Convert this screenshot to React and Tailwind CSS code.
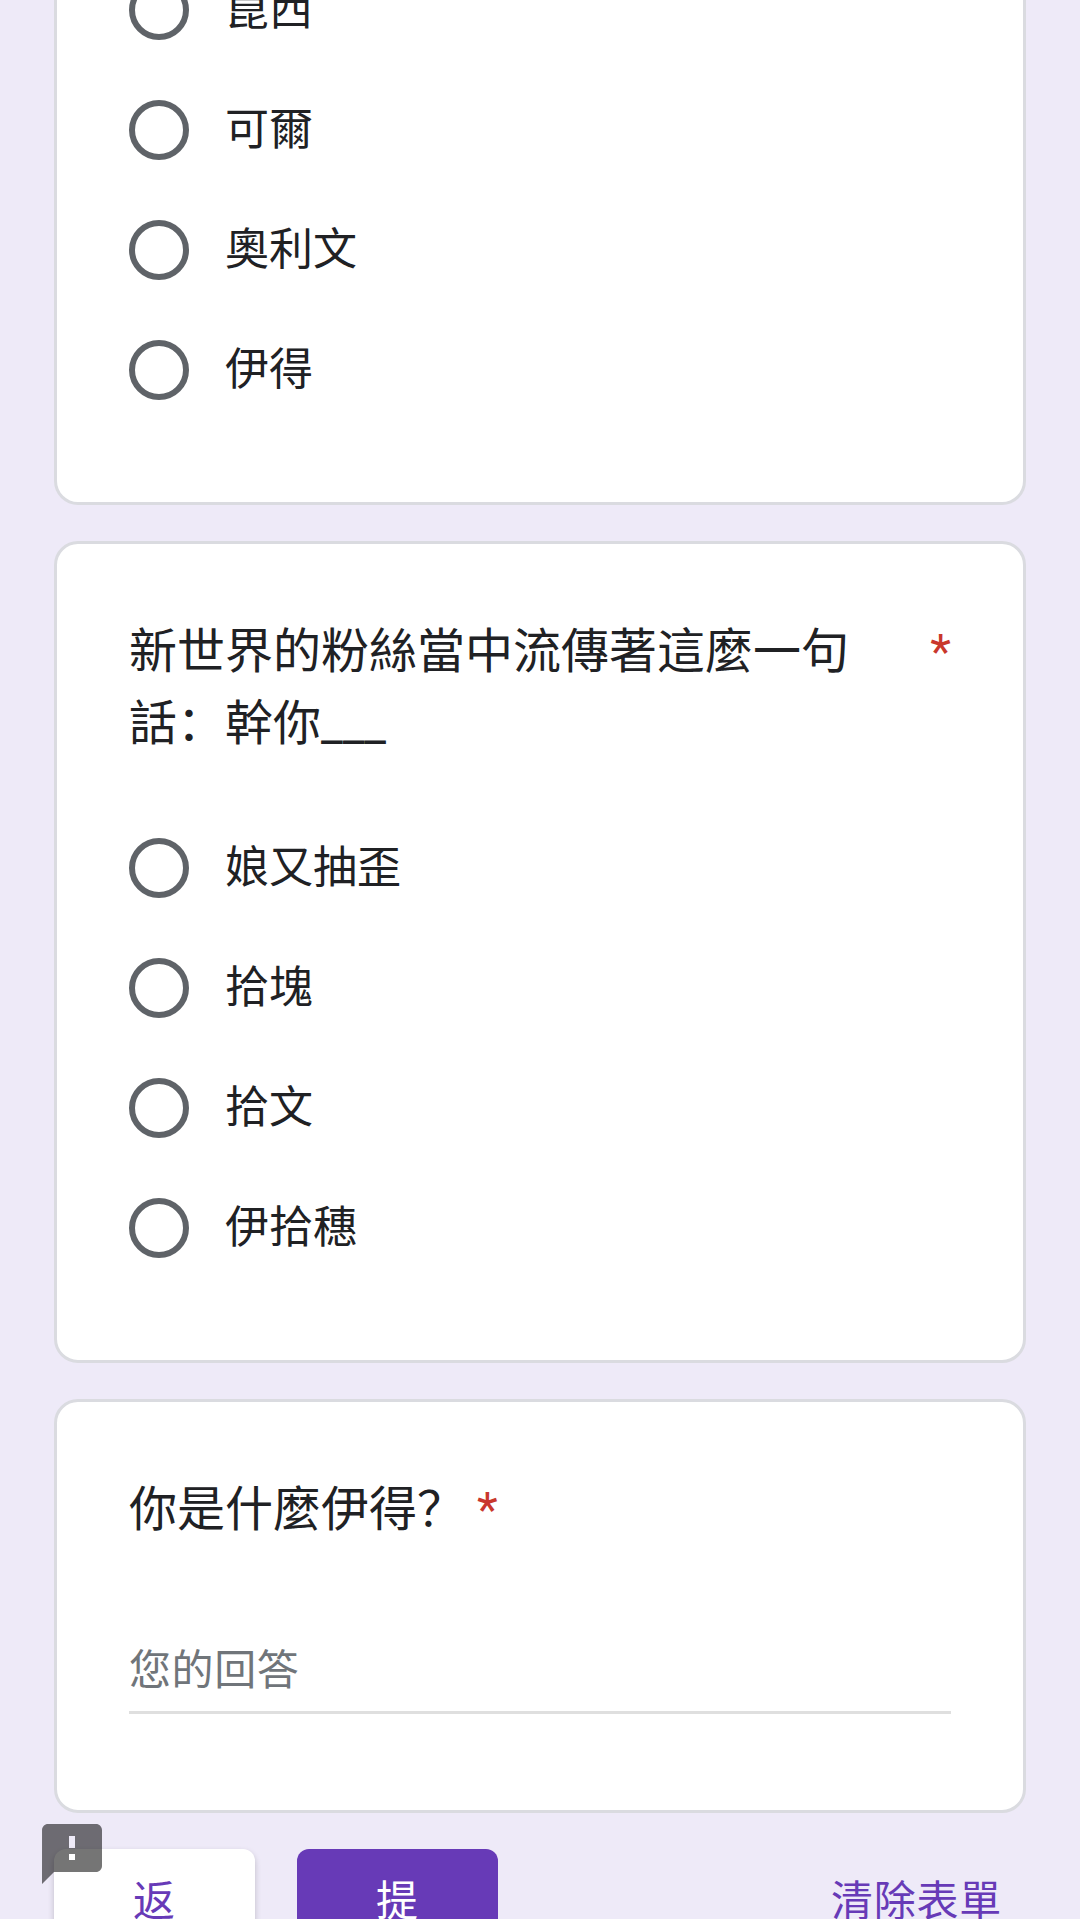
import React from 'react'

/* ── Form data ── */
const characters = ['崑西', '可爾', '奧利文', '伊得']
const phrases = ['娘又抽歪', '拾塊', '拾文', '伊拾穗']

function Radio({ label }) {
  return (
    <label className="flex h-[60px] shrink-0 items-center gap-9">
      <span className="h-[60px] w-[60px] shrink-0 rounded-full border-6 border-[#5f6368]" />
      <span className="text-[44px] leading-[60px] text-[#202124]">{label}</span>
    </label>
  )
}

function RadioGroup({ options, className = '' }) {
  return (
    <div className={`flex flex-col gap-[60px] ${className}`}>
      {options.map((label) => (
        <Radio key={label} label={label} />
      ))}
    </div>
  )
}

function Card({ children, className = '' }) {
  return (
    <section className={`flex shrink-0 flex-col border-[3px] border-[#dadbe0] bg-white px-[72px] ${className}`}>
      {children}
    </section>
  )
}

function Required() {
  return <span className="text-[#c9372c]">*</span>
}

/* Material "feedback" bubble */
function FeedbackIcon() {
  return (
    <svg viewBox="0 0 24 24" className="h-[72px] w-[72px] fill-black/54">
      <path d="M20 2H4c-1.1 0-1.99.9-1.99 2L2 22l4-4h14c1.1 0 2-.9 2-2V4c0-1.1-.9-2-2-2zm-7 12h-2v-2h2v2zm0-4h-2V6h2v4z" />
    </svg>
  )
}

export default function App() {
  return (
    <div
      lang="zh-Hans"
      className="relative flex h-[1919px] w-[1080px] flex-col gap-9 overflow-hidden bg-[#eeeaf8] px-[54px] font-['Roboto','Noto_Sans_CJK_SC',sans-serif]"
    >
      <Card className="h-[505px] justify-end overflow-hidden rounded-b-3xl border-t-0 pb-[102px]">
        <RadioGroup options={characters} />
      </Card>

      <Card className="h-[822px] rounded-3xl pt-[72px]">
        <h2 className="flex justify-between text-[48px] leading-[72px] text-[#202124]">
          <span className="w-[730px]">新世界的粉絲當中流傳著這麼一句話：幹你___</span>
          <Required />
        </h2>
        <RadioGroup options={phrases} className="mt-[78px]" />
      </Card>

      <Card className="h-[414px] rounded-3xl pt-[72px]">
        <h2 className="flex gap-3 text-[48px] leading-[72px] text-[#202124]">
          <span>你是什麼伊得？</span>
          <Required />
        </h2>
        <input
          type="text"
          placeholder="您的回答"
          className="mt-[87px] h-[81px] w-full border-b-[3px] border-[#dfdfdf] pb-[4px] text-[42px] tracking-[0.6px] outline-none placeholder:text-[#70757a]"
        />
      </Card>

      {/* ── Actions ── */}
      <div className="flex shrink-0 items-start text-[42px] leading-[60px] tracking-[0.75px]">
        <button className="flex h-[168px] w-[201px] items-start rounded-xl bg-white px-[78px] pt-[23px] break-all text-[#673ab7] shadow-[0_3px_6px_rgba(0,0,0,0.2)]">
          返回
        </button>
        <button className="ml-[42px] flex h-[168px] w-[201px] items-start rounded-xl bg-[#673ab7] px-[78px] pt-[23px] break-all text-white">
          提交
        </button>
        <button className="ml-auto px-6 pt-[23px] text-[#673ab7]">清除表單</button>
      </div>

      <div className="absolute top-[1818px] left-9">
        <FeedbackIcon />
      </div>
    </div>
  )
}
